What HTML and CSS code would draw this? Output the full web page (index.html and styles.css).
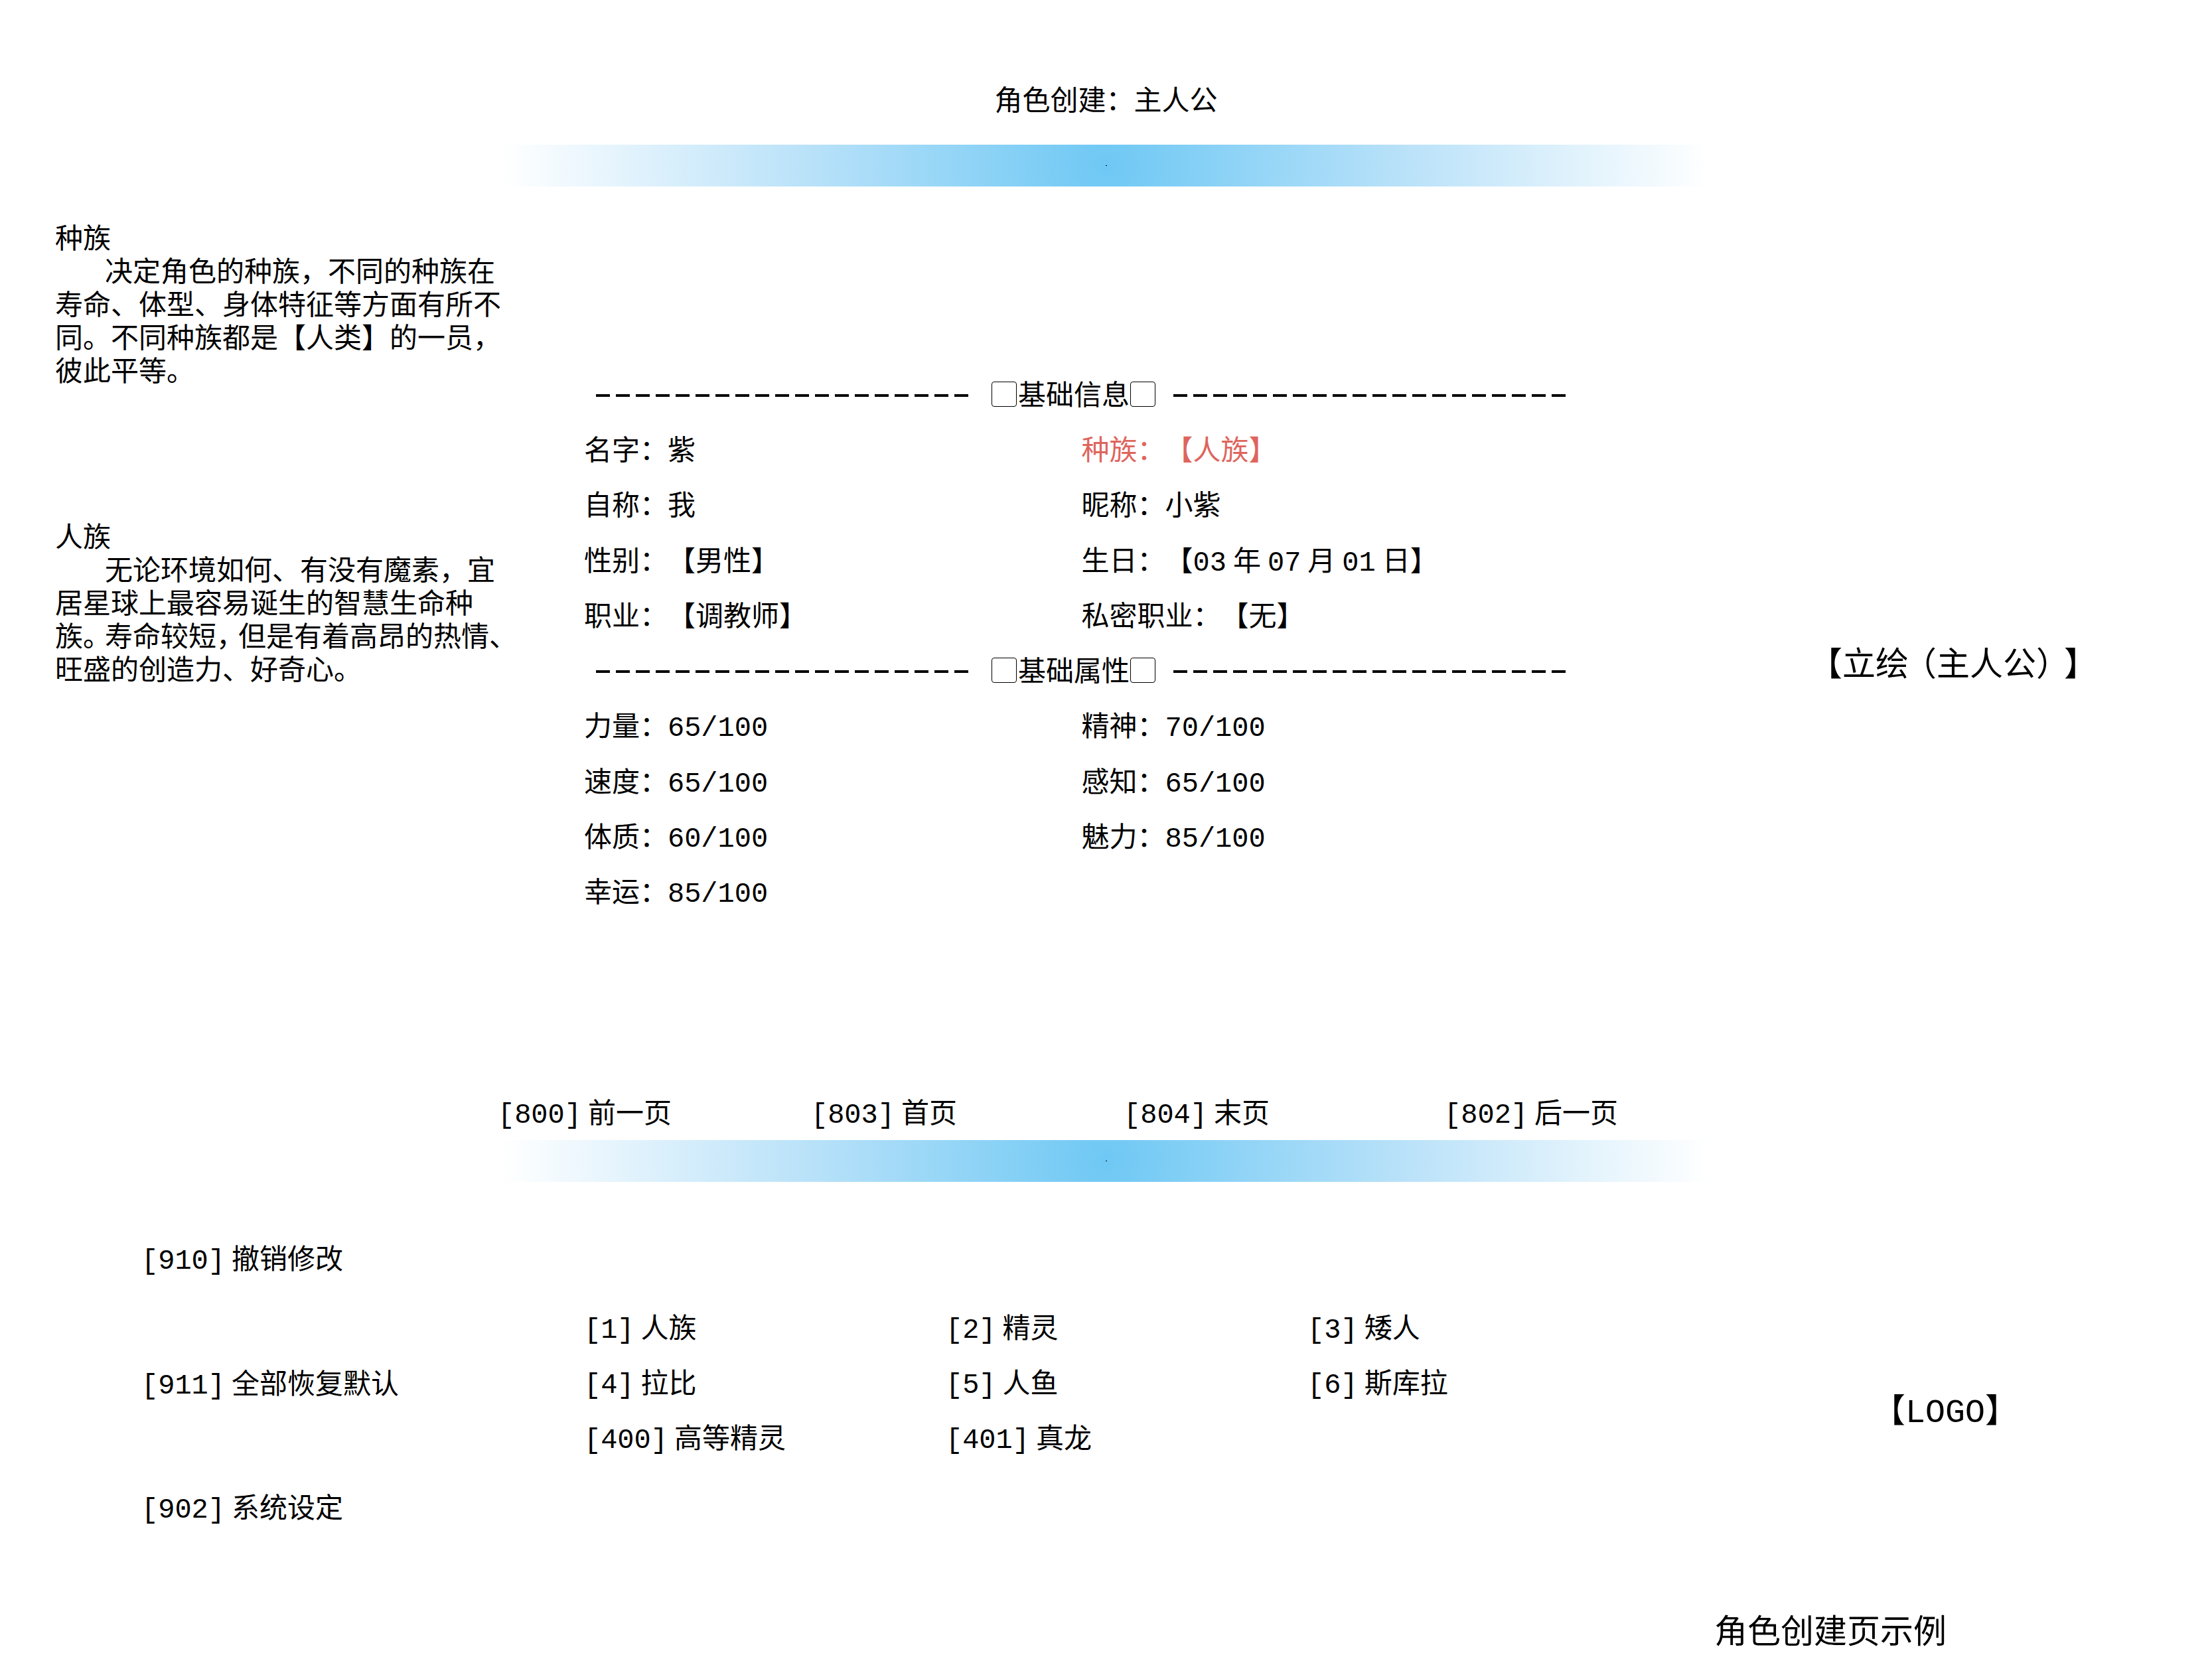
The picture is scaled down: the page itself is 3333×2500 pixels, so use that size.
FILE: index.html
```html
<!DOCTYPE html>
<html lang="zh-CN">
<head>
<meta charset="utf-8">
<meta name="viewport" content="width=device-width, initial-scale=1">
<title>角色创建</title>
<link rel="stylesheet" href="styles.css">
</head>
<body>
<header>
  <h1 class="title">角色创建：主人公</h1>
  <div class="glow-bar"></div>
</header>

<main class="sheet">
  <aside class="notes">
    <section>
      <h2 class="note-title">种族</h2>
      <p class="note">决定角色的种族，不同的种族在<br>寿命、体型、身体特征等方面有所不<br>同。不同种族都是【人类】的一员，<br>彼此平等。</p>
    </section>
    <section>
      <h2 class="note-title">人族</h2>
      <p class="note">无论环境如何、有没有魔素，宜<br>居星球上最容易诞生的智慧生命种<br>族<span class="tight">。</span>寿命较短<span class="tight">，</span>但是有着高昂的热情、<br>旺盛的创造力、好奇心。</p>
    </section>
  </aside>

  <div class="fields">
    <h2 class="divider"><span class="dashes dashes-left"></span><span class="box"></span>基础信息<span class="box"></span><span class="dashes dashes-right"></span></h2>
    <div class="field">名字：紫</div>
    <div class="field active">种族：【人族】</div>
    <div class="field">自称：我</div>
    <div class="field">昵称：小紫</div>
    <div class="field">性别：【男性】</div>
    <div class="field">生日：【03<span class="cjk">年</span>07<span class="cjk">月</span>01<span class="cjk last">日</span>】</div>
    <div class="field">职业：【调教师】</div>
    <div class="field">私密职业：【无】</div>
    <h2 class="divider"><span class="dashes dashes-left"></span><span class="box"></span>基础属性<span class="box"></span><span class="dashes dashes-right"></span></h2>
    <div class="field">力量：65/100</div>
    <div class="field">精神：70/100</div>
    <div class="field">速度：65/100</div>
    <div class="field">感知：65/100</div>
    <div class="field">体质：60/100</div>
    <div class="field">魅力：85/100</div>
    <div class="field">幸运：85/100</div>
  </div>

  <div class="portrait">【立绘<span class="paren-open">（</span>主人公<span class="paren-close">）</span>】</div>
</main>

<nav class="pager">
  <button class="command" type="button"><span>[800]</span><span>前一页</span></button>
  <button class="command" type="button"><span>[803]</span><span>首页</span></button>
  <button class="command" type="button"><span>[804]</span><span>末页</span></button>
  <button class="command" type="button"><span>[802]</span><span>后一页</span></button>
</nav>
<div class="glow-bar"></div>

<section class="console">
  <div class="system">
    <button class="command" type="button"><span>[910]</span><span>撤销修改</span></button>
    <button class="command" type="button"><span>[911]</span><span>全部恢复默认</span></button>
    <button class="command" type="button"><span>[902]</span><span>系统设定</span></button>
  </div>
  <div class="options">
    <button class="command" type="button"><span>[1]</span><span>人族</span></button>
    <button class="command" type="button"><span>[2]</span><span>精灵</span></button>
    <button class="command" type="button"><span>[3]</span><span>矮人</span></button>
    <button class="command" type="button"><span>[4]</span><span>拉比</span></button>
    <button class="command" type="button"><span>[5]</span><span>人鱼</span></button>
    <button class="command" type="button"><span>[6]</span><span>斯库拉</span></button>
    <button class="command" type="button"><span>[400]</span><span>高等精灵</span></button>
    <button class="command" type="button"><span>[401]</span><span>真龙</span></button>
  </div>
  <div class="logo">【LOGO】</div>
</section>

<footer class="caption">角色创建页示例</footer>
</body>
</html>
```
FILE: styles.css
```css
* {
  box-sizing: border-box;
  margin: 0;
  padding: 0;
}

body {
  background: #fff;
  color: #000;
  font-family: "Liberation Mono", "Noto Sans CJK SC", monospace;
  font-size: 42px;
  line-height: 50px;
  text-spacing-trim: space-all;
  text-autospace: no-autospace;
  white-space: nowrap;
}

h1,
h2 {
  font-size: 42px;
  font-weight: 400;
}

.title {
  padding: 130px 0 38px;
  text-align: center;
}

/* Radial glow with a single point in its middle */
.glow-bar {
  display: flex;
  align-items: center;
  justify-content: center;
  height: 63px;
  background: radial-gradient(circle 910px at center, #6ec8f4, #bae2f9 50%, #fff);
}

.glow-bar::after {
  content: "";
  width: 2px;
  height: 1px;
  background: #000;
}

.sheet,
.console {
  display: grid;
  grid-template-columns: 22.5% 55% 22.5%;
}

.notes {
  display: flex;
  flex-direction: column;
  gap: 200px;
  padding: 57px 0 0 83px;
}

.note {
  text-indent: 75px;
}

/* Half-width punctuation with part of its space given back */
.tight,
.paren-open,
.paren-close {
  font-feature-settings: "halt";
}

.tight {
  margin-right: 12px;
}

.paren-open {
  margin-left: 17px;
}

.paren-close {
  margin-right: 17px;
}

.fields {
  display: grid;
  grid-template-columns: 1fr 1fr;
  grid-auto-rows: 1fr;
  align-items: center;
  min-height: 833px;
  margin-top: 276px;
  padding: 0 204px 0 130px;
}

.divider {
  display: flex;
  grid-column: 1 / -1;
  align-items: center;
  padding-left: 18px;
}

.dashes {
  height: 4px;
  margin-bottom: 6px;
  background: repeating-linear-gradient(90deg, #000 0 21px, transparent 21px 30px);
}

.dashes-left {
  width: 561px;
  margin-right: 34px;
}

.dashes-right {
  width: 591px;
  margin-left: 25px;
}

.box {
  width: 38px;
  height: 38px;
  margin: 0 2px 10px 1px;
  border: 1px solid #000;
  border-radius: 4px;
}

.active {
  color: #de655d;
}

.cjk {
  margin: 0 10px;
}

.cjk.last {
  margin-right: 0;
}

.portrait,
.logo,
.caption {
  font-size: 50px;
}

.portrait {
  padding: 699px 30px 0 0;
  text-align: center;
}

.pager {
  display: grid;
  grid-template-columns: 472fr 471fr 483fr 407fr;
  margin: 266px 22.5% 12px;
}

.command {
  display: flex;
  gap: 10px;
  border: 0;
  background: none;
  color: inherit;
  font: inherit;
  cursor: pointer;
}

.system {
  display: flex;
  flex-direction: column;
  align-items: flex-start;
  justify-content: space-between;
  min-height: 425px;
  margin-top: 95px;
  padding-left: 213px;
}

.options {
  display: grid;
  grid-template-columns: repeat(3, 545fr);
  align-content: start;
  gap: 33px 0;
  padding: 199px 68px 0 130px;
}

.logo {
  padding: 324px 54px 0 0;
  text-align: center;
}

.caption {
  margin-top: 137px;
  padding-left: 77.5%;
}
```
